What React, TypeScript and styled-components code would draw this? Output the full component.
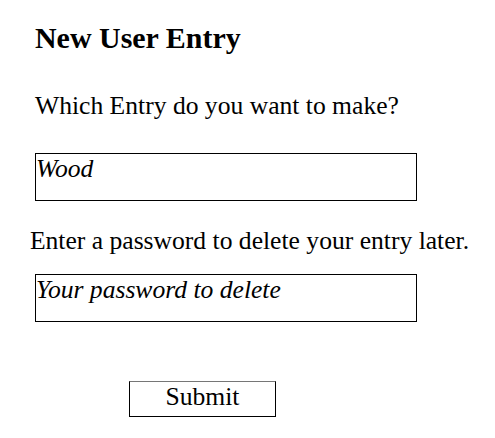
import React, { useState } from 'react';
import styled, { createGlobalStyle } from 'styled-components';

const GlobalStyle = createGlobalStyle`
  html, body {
    margin: 0;
    padding: 0;
    background: #ffffff;
  }
  body {
    font-family: "Liberation Serif", "Times New Roman", serif;
    font-size: 25.6px;
    color: #000000;
  }
`;

const Page = styled.form`
  width: 495px;
  height: 438px;
  display: flex;
  flex-direction: column;
  align-items: flex-start;
  padding: 21px 0 0 35px;
  box-sizing: border-box;
`;

const Title = styled.h3`
  margin: 0 0 36px;
  font-size: 1.17em;
  font-weight: bold;
  line-height: 34px;
`;

const Prompt = styled.p<{ $centered?: boolean }>`
  margin: 0 0 ${({ $centered }) => ($centered ? 19 : 33)}px;
  font-size: 1em;
  line-height: 29px;
  ${({ $centered }) => $centered && `
    align-self: stretch;
    margin-left: -31px;
    text-align: center;
  `}
`;

const Field = styled.textarea`
  display: block;
  width: 382px;
  height: 48px;
  margin: 0 0 25px;
  box-sizing: border-box;
  border: 1px solid #000000;
  padding: 0;
  resize: none;
  outline: none;
  background: #ffffff;
  font-family: "Liberation Serif", "Times New Roman", serif;
  font-style: italic;
  font-size: 25.6px;
  line-height: normal;
  color: #000000;

  &::placeholder {
    color: #000000;
    opacity: 1;
  }
`;

const SubmitButton = styled.button`
  width: 147px;
  height: 36px;
  margin: 34px 0 0 94px;
  background: #ffffff;
  border: 1px solid #000000;
  border-top-color: #767676;
  font-family: "Liberation Serif", "Times New Roman", serif;
  font-size: 25.6px;
  line-height: 30px;
  color: #000000;
  padding: 0 0 4px;
  cursor: pointer;
`;

const App: React.FC = () => {
  const [entry, setEntry] = useState('');
  const [password, setPassword] = useState('');

  return (
    <>
      <GlobalStyle />
      <Page onSubmit={e => e.preventDefault()}>
        <Title>New User Entry</Title>
        <Prompt>Which Entry do you want to make?</Prompt>
        <Field placeholder="Wood" value={entry} onChange={e => setEntry(e.target.value)} />
        <Prompt $centered>Enter a password to delete your entry later.</Prompt>
        <Field
          placeholder="Your password to delete"
          value={password}
          onChange={e => setPassword(e.target.value)}
        />
        <SubmitButton type="submit">Submit</SubmitButton>
      </Page>
    </>
  );
};

export default App;
